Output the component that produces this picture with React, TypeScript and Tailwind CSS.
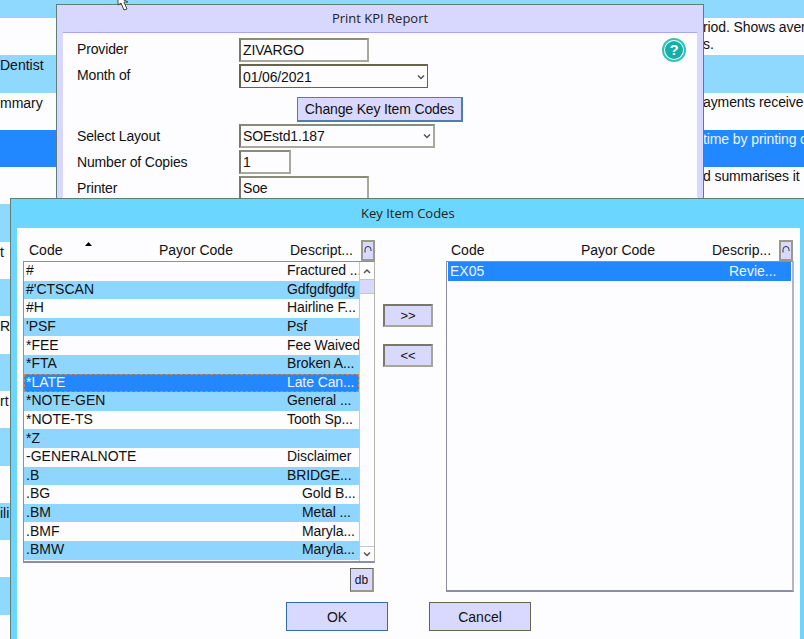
import React from "react";

const bgRows: { l?: string; r?: string; r2?: string; blue?: boolean; sel?: boolean }[] = [
  { r: "riod. Shows aver", r2: "s." },
  { blue: true, l: "Dentist" },
  { l: "mmary", r: "ayments received" },
  { sel: true, r: "time by printing c" },
  { r: "d summarises it" },
  { blue: true },
  { l: "t" },
  { blue: true },
  { l: "Re" },
  { blue: true },
  { l: "rt" },
  { blue: true },
  {},
  { blue: true, l: "ili" },
  {},
  { blue: true },
  {},
];

const leftRows: [string, string, number?][] = [
  ["#", "Fractured ..."],
  ["#'CTSCAN", "Gdfgdfgdfg"],
  ["#H", "Hairline F..."],
  ["'PSF", "Psf"],
  ["*FEE", "Fee Waived"],
  ["*FTA", "Broken A..."],
  ["*LATE", "Late Can..."],
  ["*NOTE-GEN", "General ..."],
  ["*NOTE-TS", "Tooth Sp..."],
  ["*Z", ""],
  ["-GENERALNOTE", "Disclaimer"],
  [".B", "BRIDGE..."],
  [".BG", "Gold B...", 1],
  [".BM", "Metal ...", 1],
  [".BMF", "Maryla...", 1],
  [".BMW", "Maryla...", 1],
];

function Chevron({ up = false }: { up?: boolean }) {
  return (
    <svg width="8" height="6" viewBox="0 0 8 6" className="block">
      <path d={up ? "M1 5 L4 2 L7 5" : "M1 1.5 L4 4.5 L7 1.5"} fill="none" stroke="#55554a" strokeWidth="1.5" />
    </svg>
  );
}

function Field({ label, w, mt, dark, select, value, lift, liftValue }: { label: string; w: string; mt: string; dark?: boolean; select?: boolean; value: string; lift?: boolean; liftValue?: boolean }) {
  return (
    <div className={`flex items-center ${mt}`}>
      <div className={`w-[162px] shrink-0 ${lift ? "pb-[2px]" : ""}`}>{label}</div>
      <div className={`h-[24px] ${w} flex items-center justify-between pl-[2px] pr-[2px] border-2 ${dark ? "border-[#65654f] border-r border-b" : "border-[#a9a99b] border-t-[#8b8b7b] border-l-[#77776a]"} bg-[#fdfdff]`}>
        <span className={liftValue ? "pb-[1px]" : ""}>{value}</span>
        {select && <Chevron />}
      </div>
    </div>
  );
}

function RefreshBtn() {
  return (
    <div className="w-[14px] h-[21px] shrink-0 bg-[#d9d9ff] border-2 border-[#9a9a8c] flex items-center justify-center">
      <svg width="8" height="8" viewBox="0 0 8 8"><path d="M1 6.5 V3.5 A3 3 0 0 1 7 3.5 V5" fill="none" stroke="#333" strokeWidth="1" /></svg>
    </div>
  );
}

function Head({ desc, gapA, gapB, pad, arrow }: { desc: string; gapA: string; gapB: string; pad: string; arrow?: boolean }) {
  return (
    <div className="flex items-center h-[22px] relative">
      <span className={`${pad} ${gapA}`}>Code</span>
      <span className={gapB}>Payor Code</span>
      <span className="flex-1 whitespace-nowrap">{desc}</span>
      <RefreshBtn />
      {arrow && (
        <svg width="7" height="4" viewBox="0 0 7 4" className="absolute left-[62px] top-[3px]"><path d="M0 4 L3.5 0 L7 4 Z" fill="#000" /></svg>
      )}
    </div>
  );
}

function SmallBtn({ children, mt }: { children: React.ReactNode; mt?: string }) {
  return (
    <div className={`w-[50px] h-[23px] ${mt ?? ""} bg-[#d9d9ff] border-2 border-[#a6a698] border-t-[#77776a] border-l-[#77776a] flex items-center justify-center text-[13px]`}>{children}</div>
  );
}

export default function App() {
  return (
    <div
      className="relative w-[804px] h-[639px] overflow-hidden bg-[#fdfdff] text-[14px] leading-[18px] text-[#111]"
      style={{ fontFamily: '"Liberation Sans", Arial, sans-serif' }}
    >
      {/* background list */}
      <div className="h-[18px] bg-[#8fd8ff]" />
      {bgRows.map((r, i) => (
        <div
          key={i}
          className={`h-[37.3px] flex items-start pt-[1px] whitespace-nowrap overflow-hidden ${r.sel ? "bg-[#2288ff] text-[#eef4ff]" : r.blue ? "bg-[#8fd8ff]" : "bg-[#fdfdff]"}`}
        >
          <div className="w-[56px] shrink-0">{r.l}</div>
          <div className="ml-[647px] flex-1 leading-[17px] tracking-[-0.1px]">
            <div>{r.r}</div>
            <div>{r.r2}</div>
          </div>
        </div>
      ))}

      {/* Print KPI Report window */}
      <div className="absolute left-[56px] top-[4px] w-[648px] h-[230px] bg-[#d8d8ff] border border-[#5f7f70] border-b-0 flex flex-col">
        <div className="h-[27px] shrink-0 pb-[2px] flex items-center justify-center text-[#222]" style={{ fontFamily: '"Open Sans", sans-serif', fontSize: "13px" }}>
          Print KPI Report
        </div>
        <div className="mx-[6px] flex-1 bg-[#fdfdff] border-t border-[#a5a5ff] pl-[14px] pt-[5px] relative tracking-[-0.15px]">
          <Field label="Provider" w="w-[130px]" mt="" value="ZIVARGO" lift liftValue />
          <Field label="Month of" w="w-[189px]" mt="mt-[2px]" dark select value="01/06/2021" lift />
          <div className="mt-[9px] h-[25px] flex">
            <div className="ml-[220px] w-[166px] h-[25px] bg-[#d9d9ff] border border-[#4d7fa8] border-r-2 border-b-2 flex items-center justify-center">Change Key Item Codes</div>
          </div>
          <Field label="Select Layout" w="w-[196px]" mt="mt-[2px]" select value="SOEstd1.187" />
          <Field label="Number of Copies" w="w-[52px]" mt="mt-[2px]" value="1" />
          <Field label="Printer" w="w-[130px]" mt="mt-[2px]" value="Soe" />
          <div className="absolute left-[599px] top-[5px] w-[24px] h-[24px] rounded-full border-2 border-[#2cc4bc] bg-white flex items-center justify-center">
            <div className="w-[18px] h-[18px] rounded-full bg-[#12b0a6] text-white font-bold text-[15px] leading-[18px] text-center">?</div>
          </div>
        </div>
      </div>

      {/* cursor */}
      <svg width="18" height="12" viewBox="0 0 18 12" className="absolute left-[116px] top-0">
        <path d="M2 -3 L2 5 L5 3 L8 10 L11 9 L8 2 L12 2 Z" fill="#fff" stroke="#444" strokeWidth="1" />
      </svg>

      {/* Key Item Codes window */}
      <div className="absolute left-[10px] top-[198px] w-[800px] h-[441px] bg-[#6bd6ff] border-l border-t border-[#5f7f70] flex flex-col">
        <div className="h-[28px] shrink-0 pl-[350px] flex items-center text-[#222]" style={{ fontFamily: '"Open Sans", sans-serif', fontSize: "13px" }}>
          Key Item Codes
        </div>
        <div className="ml-[6px] w-[783px] flex-1 bg-[#fdfcff] border-t border-[#8fc8ff] pt-[11px] flex flex-col">
          <div className="flex">
            {/* left list */}
            <div className="ml-[6px] w-[352px] shrink-0">
              <Head desc="Descript..." pad="pl-[6px]" gapA="w-[136px]" gapB="w-[131px]" arrow />
              <div className="h-[302px] flex border border-[#8d8da5] border-r-[#b5b5a5] border-b-2 bg-[#fdfdff]">
                <div className="flex-1 min-w-0 overflow-hidden">
                  {leftRows.map(([c, d, ind], i) => {
                    const sel = c === "*LATE";
                    return (
                      <div
                        key={c}
                        className={`h-[18.6px] flex items-center pl-[2px] pb-[2px] whitespace-nowrap ${sel ? "bg-[#2288ff] text-[#eef4ff] outline-1 -outline-offset-1 outline-dashed outline-[#c88a50]" : i % 2 ? "bg-[#8ed6ff]" : "bg-[#fdfdff]"}`}
                      >
                        <span className={`${ind ? "w-[276px]" : "w-[261px]"} shrink-0`}>{c}</span>
                        <span className="tracking-[-0.1px]">{d}</span>
                      </div>
                    );
                  })}
                </div>
                <div className="w-[15px] shrink-0 flex flex-col border-l border-[#c8c8c8] bg-[#fdfdff]">
                  <div className="h-[17px] flex items-center justify-center"><Chevron up /></div>
                  <div className="h-[15px] bg-[#d9d9ff] border-y border-[#c5c5c5]" />
                  <div className="flex-1" />
                  <div className="h-[15px] border-t border-[#c8c8c8] flex items-center justify-center"><Chevron /></div>
                </div>
              </div>
              <div className="flex justify-end mt-[5px] mr-[1px]">
                <div className="w-[24px] h-[24px] bg-[#d9d9ff] border border-[#66665a] border-r-2 border-b-2 border-r-[#9a9a8c] border-b-[#9a9a8c] flex items-center justify-center text-[12px]">db</div>
              </div>
            </div>
            {/* transfer buttons */}
            <div className="ml-[8px] w-[50px] shrink-0 pt-[65px]">
              <SmallBtn>&gt;&gt;</SmallBtn>
              <SmallBtn mt="mt-[17px]">&lt;&lt;</SmallBtn>
            </div>
            {/* right list */}
            <div className="ml-[13px] w-[348px] shrink-0">
              <div className="pr-[1px]">
                <Head desc="Descrip..." pad="pl-[5px]" gapA="w-[135px]" gapB="w-[131px]" />
              </div>
              <div className="h-[331px] border border-[#8d8da5] border-r-2 border-r-[#b5b5c5] border-b-2 bg-[#fdfdff] p-[1px] pt-0">
                <div className="h-[19px] bg-[#2288ff] text-[#eef4ff] flex items-center pl-[2px] pb-[1px] whitespace-nowrap">
                  <span className="w-[279px] shrink-0">EX05</span>
                  <span>Revie...</span>
                </div>
              </div>
            </div>
          </div>
          <div className="flex mt-[10px] ml-[269px]">
            <div className="w-[102px] h-[29px] bg-[#d9d9ff] border border-[#2f6ea8] flex items-center justify-center">OK</div>
            <div className="ml-[41px] w-[102px] h-[29px] bg-[#d9d9ff] border border-[#66664f] flex items-center justify-center">Cancel</div>
          </div>
        </div>
      </div>
    </div>
  );
}
